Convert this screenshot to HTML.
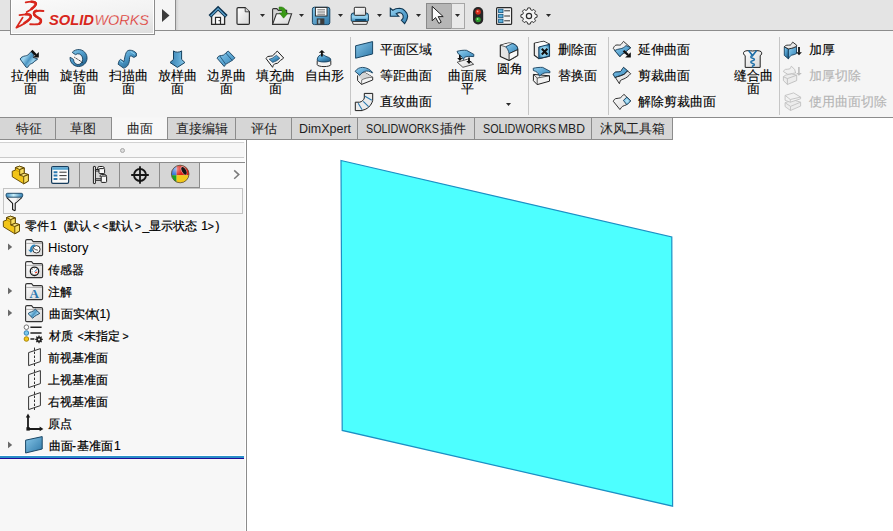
<!DOCTYPE html>
<html><head><meta charset="utf-8">
<style>
*{box-sizing:border-box}
html,body{margin:0;padding:0}
body{width:893px;height:531px;overflow:hidden;position:relative;background:#fff;font-family:"Liberation Sans",sans-serif;font-size:14px;color:#000}
.a{position:absolute}
.t{position:absolute;white-space:nowrap;line-height:13px;font-size:13px;-webkit-text-stroke:0.12px currentColor}
.l{position:absolute;white-space:nowrap;line-height:13px;font-size:13px;letter-spacing:0}
.c{text-align:center}
.lt{position:absolute;white-space:nowrap;line-height:13px;font-size:12.5px;color:#1e1e1e}
.tr{position:absolute;white-space:nowrap;line-height:13px;font-size:12px;-webkit-text-stroke:0.2px currentColor}
svg{position:absolute;overflow:visible}
</style></head><body>

<!-- ===== top bar ===== -->
<div class="a" style="left:0;top:0;width:893px;height:31px;background:#e4e4e4;border-bottom:1px solid #8c8c8c"></div>
<!-- arrow area -->
<div class="a" style="left:155px;top:0;width:21px;height:31px;background:#f5f5f5;border-bottom:1px solid #8c8c8c;border-right:1px solid #8c8c8c"></div>
<div class="a" style="left:176px;top:0;width:3px;height:30px;background:linear-gradient(90deg,#cfcfcf,#e4e4e4)"></div>

<!-- ===== ribbon ===== -->
<div class="a" style="left:0;top:31px;width:893px;height:86px;background:#f5f5f5"></div>
<!-- logo box -->
<div class="a" style="left:10px;top:0;width:145px;height:35px;border:1px solid #8c8c8c;border-top:none;background:#fff"></div>
<div class="a" style="left:12px;top:0;width:141px;height:33px;background:linear-gradient(172deg,#fafafa 0%,#f2f2f2 55%,#dedede 100%)"></div>

<div class="a" style="left:350px;top:37px;width:1px;height:78px;background:#c6c6c6"></div>
<div class="a" style="left:528px;top:37px;width:1px;height:78px;background:#c6c6c6"></div>
<div class="a" style="left:608px;top:37px;width:1px;height:78px;background:#c6c6c6"></div>
<div class="a" style="left:779px;top:37px;width:1px;height:78px;background:#c6c6c6"></div>

<!-- big buttons labels -->
<div class="t c" style="left:5px;top:69px;width:50px">拉伸曲<br>面</div>
<div class="t c" style="left:54px;top:69px;width:50px">旋转曲<br>面</div>
<div class="t c" style="left:103px;top:69px;width:50px">扫描曲<br>面</div>
<div class="t c" style="left:152px;top:69px;width:50px">放样曲<br>面</div>
<div class="t c" style="left:201px;top:69px;width:50px">边界曲<br>面</div>
<div class="t c" style="left:250px;top:69px;width:50px">填充曲<br>面</div>
<div class="t c" style="left:299px;top:69px;width:50px">自由形</div>

<div class="t" style="left:380px;top:43px">平面区域</div>
<div class="t" style="left:380px;top:69px">等距曲面</div>
<div class="t" style="left:380px;top:95px">直纹曲面</div>
<div class="t c" style="left:442px;top:69px;width:50px">曲面展<br>平</div>
<div class="t c" style="left:484px;top:62px;width:51px">圆角</div>

<div class="t" style="left:558px;top:43px">删除面</div>
<div class="t" style="left:558px;top:69px">替换面</div>

<div class="t" style="left:638px;top:43px">延伸曲面</div>
<div class="t" style="left:638px;top:69px">剪裁曲面</div>
<div class="t" style="left:638px;top:95px">解除剪裁曲面</div>
<div class="t c" style="left:728px;top:69px;width:51px">缝合曲<br>面</div>

<div class="t" style="left:809px;top:43px">加厚</div>
<div class="t" style="left:809px;top:69px;color:#b4b4b4">加厚切除</div>
<div class="t" style="left:809px;top:95px;color:#b4b4b4">使用曲面切除</div>

<!-- ===== tabs ===== -->
<div class="a" style="left:0;top:117px;width:673px;height:22px;background:#d6d6d6;border-top:1px solid #8c8c8c;border-right:1px solid #8c8c8c"></div>
<div class="a" style="left:55px;top:117px;width:1px;height:22px;background:#8c8c8c"></div>
<div class="a" style="left:111px;top:117px;width:57px;height:22px;background:#f7f7f7;border-left:1px solid #8c8c8c;border-right:1px solid #8c8c8c"></div>
<div class="a" style="left:235px;top:117px;width:1px;height:22px;background:#8c8c8c"></div>
<div class="a" style="left:291px;top:117px;width:1px;height:22px;background:#8c8c8c"></div>
<div class="a" style="left:357px;top:117px;width:1px;height:22px;background:#8c8c8c"></div>
<div class="a" style="left:474px;top:117px;width:1px;height:22px;background:#8c8c8c"></div>
<div class="a" style="left:591px;top:117px;width:1px;height:22px;background:#8c8c8c"></div>

<div class="t" style="left:16px;top:122px;color:#1e1e1e;-webkit-text-stroke:0.05px #1e1e1e">特征</div>
<div class="t" style="left:70px;top:122px;color:#1e1e1e;-webkit-text-stroke:0.05px #1e1e1e">草图</div>
<div class="t" style="left:127px;top:122px;color:#1e1e1e;-webkit-text-stroke:0.05px #1e1e1e">曲面</div>
<div class="t" style="left:176px;top:122px;color:#1e1e1e;-webkit-text-stroke:0.05px #1e1e1e">直接编辑</div>
<div class="t" style="left:251px;top:122px;color:#1e1e1e;-webkit-text-stroke:0.05px #1e1e1e">评估</div>
<div class="lt" id="dx" style="left:299px;top:123px">DimXpert</div>
<div class="lt" id="sw1" style="left:365.5px;top:123px;transform:scaleX(0.86);transform-origin:0 0">SOLIDWORKS</div>
<div class="t" style="left:440px;top:122px;color:#1e1e1e;-webkit-text-stroke:0.05px #1e1e1e">插件</div>
<div class="lt" id="sw2" style="left:482.7px;top:123px;transform:scaleX(0.86);transform-origin:0 0">SOLIDWORKS</div>
<div class="lt" id="mbd" style="left:557.5px;top:123px;transform:scaleX(0.97);transform-origin:0 0">MBD</div>
<div class="t" style="left:600px;top:122px;color:#1e1e1e;-webkit-text-stroke:0.05px #1e1e1e">沐风工具箱</div>

<!-- ===== left panel ===== -->
<div class="a" style="left:0;top:139px;width:247px;height:392px;background:#f7f7f7;border-top:1px solid #8c8c8c;border-right:1px solid #8c8c8c"></div>
<div class="a" style="left:245px;top:140px;width:1px;height:391px;background:#fff"></div>
<div class="a" style="left:0;top:140px;width:245px;height:2px;background:#fff"></div>
<div class="a" style="left:0;top:142px;width:244px;height:1px;background:#d2d2d2"></div>
<div class="a" style="left:0;top:157px;width:244px;height:1px;background:#cacaca"></div>
<div class="a" style="left:0;top:158px;width:245px;height:4px;background:#fbfbfb"></div>
<div class="a" style="left:119.5px;top:147.5px;width:5.5px;height:5.5px;border-radius:50%;background:#dcdcdc;border:1px solid #a8a8a8"></div>
<!-- panel tabs -->
<div class="a" style="left:0;top:162px;width:245px;height:1px;background:#8c8c8c"></div>
<div class="a" style="left:0;top:163px;width:40px;height:25px;background:#fafafa"></div>
<div class="a" style="left:39px;top:163px;width:161px;height:25px;background:#d6d6d6;border-left:1px solid #8c8c8c;border-right:1px solid #8c8c8c;border-bottom:1px solid #8c8c8c"></div>
<div class="a" style="left:79px;top:163px;width:1px;height:24px;background:#8c8c8c"></div>
<div class="a" style="left:119px;top:163px;width:1px;height:24px;background:#8c8c8c"></div>
<div class="a" style="left:159px;top:163px;width:1px;height:24px;background:#8c8c8c"></div>
<div class="a" style="left:200px;top:163px;width:45px;height:25px;background:#fafafa"></div>
<!-- filter box -->
<div class="a" style="left:3px;top:188px;width:240px;height:26px;background:#f7f7f7;border:1px solid #c4c4c4"></div>

<div class="a" style="left:247px;top:139px;width:646px;height:392px;background:#fff"></div>
<div class="a" style="left:247px;top:139px;width:426px;height:1px;background:#8c8c8c"></div>
<div class="a" style="left:673px;top:118px;width:220px;height:22px;background:#fff"></div>
<div class="a" style="left:0;top:117px;width:893px;height:1px;background:#8c8c8c"></div>
<div class="a" style="left:112px;top:117px;width:55px;height:1px;background:#f6f6f6"></div>

<!-- tree text -->
<div class="tr" style="left:25px;top:220px">零件</div>
<div class="tr" style="left:50px;top:220px">1</div>
<div class="tr" style="left:63.5px;top:220px">(</div>
<div class="tr" style="left:67px;top:220px">默认</div>
<div class="tr" id="lt1" style="left:93px;top:220px;font-size:10.5px">&lt;</div>
<div class="tr" style="left:102px;top:220px;font-size:10.5px">&lt;</div>
<div class="tr" style="left:108.5px;top:220px">默认</div>
<div class="tr" style="left:135px;top:220px;font-size:10.5px">&gt;</div>
<div class="tr" style="left:142.5px;top:220px">_</div>
<div class="tr" style="left:149px;top:220px">显示状态</div>
<div class="tr" style="left:201.3px;top:220px">1</div>
<div class="tr" style="left:207.8px;top:220px;font-size:10.5px">&gt;</div>
<div class="tr" style="left:215.5px;top:220px">)</div>
<div class="l" style="left:48px;top:241px">History</div>
<div class="tr" style="left:48px;top:264px">传感器</div>
<div class="tr" style="left:48px;top:286px">注解</div>
<div class="tr" style="left:48.5px;top:308px">曲面实体</div>
<div class="tr" style="left:95.5px;top:308px">(1)</div>
<div class="tr" style="left:48.5px;top:330px">材质</div>
<div class="tr" style="left:77.5px;top:330px;font-size:10.5px">&lt;</div>
<div class="tr" style="left:84px;top:330px">未指定</div>
<div class="tr" style="left:122.6px;top:330px;font-size:10.5px">&gt;</div>
<div class="tr" style="left:48px;top:352px">前视基准面</div>
<div class="tr" style="left:48px;top:374px">上视基准面</div>
<div class="tr" style="left:48px;top:396px">右视基准面</div>
<div class="tr" style="left:48px;top:418px">原点</div>
<div class="tr" style="left:48.5px;top:440px">曲面</div>
<div class="tr" style="left:72px;top:440px">-</div>
<div class="tr" style="left:76.5px;top:440px">基准面</div>
<div class="tr" style="left:114px;top:440px">1</div>
<div class="a" style="left:0;top:455px;width:244px;height:1px;background:#fff"></div>
<div class="a" style="left:0;top:456px;width:244px;height:2px;background:#2a8fc8"></div>
<div class="a" style="left:0;top:458px;width:244px;height:1px;background:#1c0c98"></div>

<!-- ===== icons & graphics ===== -->
<svg style="left:0;top:0" width="893" height="531" viewBox="0 0 893 531">
<!-- graphics surface -->
<polygon points="341,160.5 671.8,237 672.6,506.2 342.2,430.4" fill="#4dffff" stroke="#1c8fc4" stroke-width="1.2"/>

<defs>
<linearGradient id="gb" x1="0" y1="0" x2="1" y2="1"><stop offset="0" stop-color="#86c6e8"/><stop offset="1" stop-color="#2f78a8"/></linearGradient>
<linearGradient id="gb2" x1="0" y1="0" x2="1" y2="0"><stop offset="0" stop-color="#3f8fbf"/><stop offset="0.5" stop-color="#a6d8f0"/><stop offset="1" stop-color="#3a86b6"/></linearGradient>
<linearGradient id="gw" x1="0" y1="0" x2="1" y2="1"><stop offset="0" stop-color="#ffffff"/><stop offset="1" stop-color="#d6d6d6"/></linearGradient>
<linearGradient id="gy" x1="0" y1="0" x2="0" y2="1"><stop offset="0" stop-color="#fff07a"/><stop offset="1" stop-color="#e8be1a"/></linearGradient>
<linearGradient id="gb3" x1="0" y1="0" x2="1" y2="0.6"><stop offset="0" stop-color="#4f9ccc"/><stop offset="0.35" stop-color="#9fd6f0"/><stop offset="0.6" stop-color="#4a94c2"/><stop offset="0.8" stop-color="#9ad2ee"/><stop offset="1" stop-color="#3f88b8"/></linearGradient>
<linearGradient id="gb4" x1="0" y1="0" x2="0.7" y2="1"><stop offset="0" stop-color="#8fd0ee"/><stop offset="0.5" stop-color="#4f9ccb"/><stop offset="1" stop-color="#24648f"/></linearGradient>
<linearGradient id="gb5" x1="0" y1="0" x2="1" y2="1"><stop offset="0" stop-color="#96d2f0"/><stop offset="0.5" stop-color="#5ea8d4"/><stop offset="1" stop-color="#3a84b4"/></linearGradient>
<radialGradient id="gr1" cx="0.5" cy="0.5" r="0.6"><stop offset="0" stop-color="#c8ecfa"/><stop offset="0.6" stop-color="#7cc4e6"/><stop offset="1" stop-color="#2a6e9c"/></radialGradient>
<radialGradient id="ballhl" cx="0.5" cy="0.5" r="0.5"><stop offset="0" stop-color="#fff" stop-opacity="0.55"/><stop offset="1" stop-color="#fff" stop-opacity="0"/></radialGradient>
<linearGradient id="gfil" x1="0" y1="0" x2="1" y2="0"><stop offset="0" stop-color="#3a8cc0"/><stop offset="0.45" stop-color="#c8eefa"/><stop offset="1" stop-color="#2f7db0"/></linearGradient>
<linearGradient id="gpr" x1="0" y1="0" x2="0" y2="1"><stop offset="0" stop-color="#4a9ccc"/><stop offset="0.45" stop-color="#9ad6f2"/><stop offset="1" stop-color="#3a88b8"/></linearGradient>
<linearGradient id="gar" x1="0" y1="0" x2="1" y2="0"><stop offset="0" stop-color="#3a80b0"/><stop offset="0.55" stop-color="#5aa4d0"/><stop offset="1" stop-color="#8ccbea"/></linearGradient>
</defs>

<!-- 3DS logo -->
<g fill="none" stroke="#d8261c" stroke-linecap="round" stroke-linejoin="round">
<path d="M25.8,2.4 C29,1.6 33,1.4 35.2,2.3 C37,3.3 36,5.2 34.5,6.6 C32,9 29,10.8 26.8,12" stroke-width="1.9"/>
<path d="M19.5,15.2 C23,14.6 27,14.2 29.5,14.6 C31.5,15.2 31.4,17.2 30,18.8 C27,22 21,25.6 16.4,27.6 L22.6,17.6" stroke-width="1.8"/>
<path d="M31.5,1.7 C34,1.6 36.2,2.4 35.6,4.4 C35,6 33.4,7.6 31.6,8.8" stroke-width="2.6"/>
<path d="M26,14.3 C28,14.2 30.6,14.4 30.8,16.6 C30.8,18.6 28.4,20.6 24.4,23" stroke-width="2.5"/>
<path d="M36.4,10.8 C34.4,11.2 33.2,12.6 34.4,14.8 C35.6,16.6 38.6,17.8 40.2,19 C41.4,20.2 41.2,22.4 39.4,23.6" stroke-width="2.5"/>
<path d="M43.4,11 C40.5,10.6 37,10.6 35,11.6 C33.3,12.6 33.4,14.6 35.4,16.2 C37.5,17.8 40.6,18.8 41,21 C41.3,23 39.5,24.2 37.5,24.3 C35,24.5 32.5,24.4 30.2,24.3" stroke-width="1.9"/>
</g>
<text x="49" y="25" font-family="Liberation Sans" font-size="15" font-weight="bold" font-style="italic" fill="#d8261c" textLength="45" lengthAdjust="spacingAndGlyphs">SOLID</text>
<text x="94.5" y="25" font-family="Liberation Sans" font-size="15" font-style="italic" fill="#d8261c" stroke="#f2f2f2" stroke-width="0.3" textLength="54.5" lengthAdjust="spacingAndGlyphs">WORKS</text>

<!-- home -->
<path d="M211.6,15 V24.3 H224.6 V15" fill="#f4f4f4" stroke="#2a2a2a" stroke-width="1.3"/>
<rect x="215.5" y="17.4" width="5" height="6.9" fill="#fff" stroke="#2a2a2a" stroke-width="1.2"/>
<rect x="218.6" y="20" width="1.2" height="1.2" fill="#2a2a2a"/>
<polyline points="209.8,16.4 218.1,8.2 226.4,16.4" fill="none" stroke="#0f3552" stroke-width="3.6" stroke-linejoin="miter"/>
<polyline points="210.6,16 218.1,8.6 225.6,16" fill="none" stroke="#5ea6d2" stroke-width="1.1"/>

<!-- new doc -->
<path d="M237,8.8 Q237,7.6 238.2,7.6 H245.2 L249.4,11.8 V23.2 Q249.4,24.4 248.2,24.4 H238.2 Q237,24.4 237,23.2 Z" fill="url(#gw)" stroke="#2a2a2a" stroke-width="1.2"/>
<path d="M245.2,7.6 V11.8 H249.4" fill="#d0d0d0" stroke="#2a2a2a" stroke-width="0.8"/>

<!-- open -->
<path d="M272.6,24.4 V9.6 Q272.6,8.6 273.6,8.6 H276.8 L278.4,10.4 H286.6 V13.8" fill="#d4d4d4" stroke="#333" stroke-width="1.1"/>
<path d="M272.6,24.4 L276.4,13.8 H291.6 L288,24.4 Z" fill="url(#gw)" stroke="#333" stroke-width="1.1"/>
<path d="M279,7 C283.5,6.4 286.4,8.8 285.8,13 L288.2,13 L283.6,18.2 L279.4,13 L282,13 C282.4,10.6 281.4,9.4 279,9.6 Z" fill="#3a9a16" stroke="#24700c" stroke-width="0.5"/>

<!-- save -->
<rect x="312.4" y="7.2" width="17.4" height="17.4" rx="2" fill="url(#gb)" stroke="#1a4766" stroke-width="1"/>
<rect x="315.4" y="7.4" width="11.6" height="8.6" fill="#fcfcfc" stroke="#222" stroke-width="0.9"/>
<path d="M317.4,9.8 H325 M317.4,12 H325 M317.4,14.2 H325" stroke="#4a4a4a" stroke-width="0.8"/>
<rect x="316.8" y="18.4" width="7.6" height="6.2" fill="#3c3c3c"/>
<rect x="318.2" y="19.6" width="2" height="4" fill="#9ab8c8"/>

<!-- print -->
<path d="M351.2,15.2 Q351.2,13 353.4,13 H366.2 Q368.4,13 368.4,15.2 V20.2 Q368.4,21.4 367.2,21.4 H352.4 Q351.2,21.4 351.2,20.2 Z" fill="url(#gpr)" stroke="#14405e" stroke-width="1"/>
<rect x="355.2" y="19" width="10.9" height="1.9" fill="#0e4a70"/>
<rect x="354.3" y="7.3" width="11.3" height="8" rx="0.8" fill="url(#gw)" stroke="#2a2a2a" stroke-width="1"/>
<path d="M352.4,21.6 H367.6 L366.8,24.3 H353.2 Z" fill="#fafafa" stroke="#333" stroke-width="1" stroke-linejoin="round"/>
<!-- undo -->
<path d="M390.3,8.3 L392.8,10.3 C394.5,9 397,8.3 399.6,8.3 C402,8.4 404,9.6 405,10.8 C407,12.8 407.8,14.6 407.7,16.2 C407.6,18.6 406.8,20.4 404.6,23.7 L401.4,20.3 C402.6,19.4 403.2,18.6 403.2,17.6 C403.4,16.2 403,14.8 402.3,14 C401.4,13 400.4,12.6 399.6,12.6 C398.6,12.6 397.6,12.9 396.2,13.7 L398.7,16.2 L390.3,16.2 Z" fill="url(#gb5)" stroke="#0f3550" stroke-width="1.1" stroke-linejoin="miter"/>
<!-- select button -->
<rect x="426.5" y="3.5" width="25" height="25" fill="#b6b6b6" stroke="#8a8a8a" stroke-width="1"/>
<rect x="451.5" y="3.5" width="13" height="25" fill="#e9e9e9" stroke="#a6a6a6" stroke-width="1"/>
<polygon points="432.2,6.4 432.2,20.8 435.6,17.6 438.8,23.4 441.2,22.2 438.2,16.6 443.2,16.6" fill="#fafafa" stroke="#1e1e1e" stroke-width="1" stroke-linejoin="round"/>

<!-- traffic -->
<rect x="473" y="7" width="10.2" height="17.4" rx="5" fill="#262626"/>
<circle cx="478.1" cy="12" r="2.7" fill="#d62a1a"/>
<circle cx="478.1" cy="19.6" r="2.7" fill="#2a9a2a"/>
<circle cx="477.6" cy="11.4" r="0.9" fill="#ff9a8a"/>
<circle cx="477.6" cy="19" r="0.9" fill="#9ae09a"/>

<!-- list -->
<rect x="496.6" y="7.6" width="15" height="16.8" rx="1" fill="#f2f2f2" stroke="#2a2a2a" stroke-width="1.2"/>
<rect x="498.6" y="9.2" width="4.4" height="3.4" fill="#5ab0dc" stroke="#14507a" stroke-width="0.8"/>
<rect x="498.6" y="14.3" width="4.4" height="3.4" fill="#5ab0dc" stroke="#14507a" stroke-width="0.8"/>
<rect x="498.6" y="19.2" width="4.4" height="3.4" fill="#5ab0dc" stroke="#14507a" stroke-width="0.8"/>
<path d="M504.2,10.8 H510 M504.2,16 H510 M504.2,20.8 H510" stroke="#333" stroke-width="1"/>

<!-- gear -->
<path id="gear" d="M527.6,8.2 H530.4 L531,10.4 L532.6,11.1 L534.6,10 L536.6,12 L535.5,14 L536.2,15.6 L538.4,16.2 V19 L536.2,19.6 L535.5,21.2 L536.6,23.2 L534.6,25.2 L532.6,24.1 L531,24.8 L530.4,27 H527.6 L527,24.8 L525.4,24.1 L523.4,25.2 L521.4,23.2 L522.5,21.2 L521.8,19.6 L519.6,19 V16.2 L521.8,15.6 L522.5,14 L521.4,12 L523.4,10 L525.4,11.1 L527,10.4 Z" fill="#f4f4f4" stroke="#2a2a2a" stroke-width="1.1" stroke-linejoin="round" transform="translate(529 16) scale(0.86) translate(-529 -17.6)"/>
<circle cx="529" cy="16" r="2.6" fill="#f4f4f4" stroke="#2a2a2a" stroke-width="1.2"/>
<!-- 拉伸曲面 -->
<path d="M20.1,59 C21,57.2 23,56.2 25.3,55.9 C27,55.6 28.6,54.8 29.6,53.2 C30.2,52.4 30.8,51.8 31.5,51.6 L33.6,54.2 L33.1,57.4 L37.7,59 C36.6,60.2 35.6,60.6 34.8,61.2 C33.6,62.4 32.6,63.4 31.2,63.8 C29.6,64.2 28.8,65.4 27.8,67.3 L26.1,67.3 Z" fill="url(#gb3)" stroke="#173f5e" stroke-width="0.9" stroke-linejoin="round"/>
<path d="M31.6,50.6 L36,55.2" stroke="#111" stroke-width="2.4"/>
<polygon points="33.1,57.6 38.8,57.6 38.8,51.9" fill="#111"/>

<!-- 旋转曲面 -->
<path d="M72.2,52.4 A8.5,8.5 0 1,1 70.1,57.2 L73.5,59.4 A4.6,5.4 0 1,0 75.5,54.7 Z" fill="url(#gb4)" stroke="#173f5e" stroke-width="0.9" stroke-linejoin="round"/>
<path d="M74.3,57.2 L82.7,62.5" stroke="#1a1a1a" stroke-width="0.9" stroke-dasharray="1.2,0.6"/>

<!-- 扫描曲面 -->
<path d="M118.1,64.2 L119.2,60.6 L120.6,59.4 L123.9,61.6 C124.6,59 125,55 126.2,52.6 C127,50.8 128.4,50.2 130,50.2 C132.4,50.2 134.6,51.4 136.4,53.2 L136.4,56.1 L133.9,57.4 L131.4,56.1 C130.4,55.6 129.8,56.4 129.6,57.4 C129.4,60 129.6,62.6 127.6,65.6 C126.4,67.2 124.8,68 123.5,68.1 Z" fill="url(#gb4)" stroke="#173f5e" stroke-width="0.9" stroke-linejoin="round"/>
<path d="M120,60.4 L123,62.6 M130.6,51.6 L135,54.4" stroke="#9ad8f2" stroke-width="0.9"/>
<!-- 放样曲面 -->
<path d="M173.5,50.9 C175,52.6 180,52.6 181.6,50.9 L181.6,59.4 L184.9,62.5 L177.4,67.4 L170,62.5 L173.5,59.4 Z" fill="url(#gar)" stroke="#14405e" stroke-width="1" stroke-linejoin="round"/>

<!-- 边界曲面 -->
<path d="M217.1,58.2 C217.8,57 218.4,56.2 219.2,55.9 C220.6,55.4 222.2,55.6 223.4,55.1 C224.4,54.6 225,53.8 225.6,53.2 C226.6,52.2 227.4,51.6 228.3,51.1 L234.9,57.8 C234,59 233,59.8 232,60.5 C230.8,61.4 229.6,62 228.7,62.6 C227.4,63.2 226.2,63.8 225.4,64.8 L224.2,66.5 Z" fill="url(#gb5)" stroke="#173f5e" stroke-width="0.9" stroke-linejoin="round"/>
<path d="M219.8,56 L225.6,64.2 M225.8,53 L232.2,60.4" stroke="#1f5478" stroke-width="0.9"/>

<!-- 填充曲面 -->
<path d="M266.1,58.6 C266.6,57.4 267.2,56.8 267.8,56.5 C269.4,56 271,56.4 272.4,55.9 C273.2,55.6 273.8,54.8 274.4,54 C275.4,52.8 276.4,51.8 277.3,51.1 L283.7,58 C282.6,59 281.6,59.6 280.6,60.3 C279.6,61 278.6,62.4 277.7,63.1 C276.6,63.8 275.4,63.4 274.4,64 C273.6,64.6 273,66 272.6,67.3 Z" fill="#f4f4f4" stroke="#1e1e1e" stroke-width="1" stroke-linejoin="round"/>
<path d="M269.2,59.2 C270.5,58.8 271.6,58.6 272.6,58 C274,57 275.4,55.8 276.5,55.3 L279.8,58.2 C278.6,59.4 277.2,60.4 276.1,61.1 C274.8,61.6 273.6,61.8 272.8,62.5 Z" fill="url(#gb4)" stroke="#173f5e" stroke-width="0.7" stroke-linejoin="round"/>

<!-- 自由形 -->
<path d="M317.2,60.5 V64.6 A6.8,2 0 0,0 330.8,64.6 V60.5" fill="#f2f2f2" stroke="#2a2a2a" stroke-width="1"/>
<path d="M317.2,60 C317.2,57 319.5,54.6 322,54.6 C324,54.6 325,56.2 327,56.8 C329.4,57.4 330.8,58.4 330.8,60 A6.8,2 0 0,1 317.2,60 Z" fill="url(#gb4)" stroke="#173f5e" stroke-width="0.9"/>
<path d="M321.9,52 V56.4" stroke="#111" stroke-width="1.8"/>
<polygon points="318.8,52.8 321.9,50 325,52.8" fill="#111"/>

<!-- 平面区域 -->
<polygon points="355.6,45.8 372.6,41.6 372.6,54 355.6,58.2" fill="url(#gb)" stroke="#1a4766" stroke-width="1" stroke-linejoin="round"/>

<!-- 等距曲面 -->
<path d="M357.6,75.6 C360.5,73.4 363.5,72.4 365.6,73 L372.7,77.2 V80 L361.6,84.4 L357.6,80.6 Z" fill="#f4f4f4" stroke="#2a2a2a" stroke-width="1" stroke-linejoin="round"/>
<path d="M357.6,75.6 C360.5,73.4 363.5,72.4 365.6,73 L372.7,77.2 C368,77.4 364,78.4 361.6,80.2 C360.8,78.6 359.5,77.4 357.6,75.6 Z" fill="#d6d6d6"/>
<path d="M361.6,80.2 C364,78.4 368,77.4 372.7,77.2 M361.6,80.2 V84.4" fill="none" stroke="#444" stroke-width="0.7"/>
<path d="M355.1,71.4 C357,68.6 359.6,67.4 362.6,67.4 C366.6,67.4 370.4,69.6 372.7,72.6 L372.2,73 C370,71.2 367,70.6 364.6,71.4 C362.6,72.2 361,73.6 359.8,75.4 Z" fill="url(#gb5)" stroke="#173f5e" stroke-width="0.9" stroke-linejoin="round"/>

<!-- 直纹曲面 -->
<path d="M364.3,93.4 H372.7 V100.4 C371.5,105.5 367,109.6 362.3,110.2 V110.6 H355.3 V102.2 H359.6 C361.8,101.8 364,99.8 364.3,98 Z" fill="#ececec" stroke="#1e1e1e" stroke-width="1" stroke-linejoin="round"/>
<path d="M365,96.3 L371.8,100.2 M363.2,101.3 L368.6,106.7 M358.2,103.3 L362.1,109.7" stroke="#2a7ab0" stroke-width="1.1"/>

<!-- 曲面展平 -->
<polygon points="457.2,62.2 467.5,59.2 473.7,64.3 462.9,67.3" fill="url(#gw)" stroke="#444" stroke-width="0.9" stroke-linejoin="round"/>
<path d="M459.9,55 V59 M469,57.4 V62" stroke="#111" stroke-width="1.8"/>
<polygon points="457.2,58 462.6,58 459.9,61" fill="#111"/>
<polygon points="466.3,61 471.7,61 469,64" fill="#111"/>
<path d="M457,51.4 C460,50.4 464,50 466.5,50.3 L473.9,54.4 L473.7,56.6 C470,56.2 466,56.4 464.4,57.4 L463.4,59.6 C462,57 460.4,54.6 458.3,53.9 Z" fill="url(#gb5)" stroke="#173f5e" stroke-width="0.9" stroke-linejoin="round"/>

<!-- 圆角 -->
<path d="M500.3,45.2 L507.3,43.2 C510,43 512.6,43.4 514.1,44.3 C516,45.4 517.4,47 517.7,48.6 V55.4 L509.1,60.4 L500.3,56.5 Z" fill="#e4e4e4" stroke="#1e1e1e" stroke-width="1.1" stroke-linejoin="round"/>
<path d="M500.6,45.3 L507.3,43.4 C509.5,43.2 511.4,43.4 512.2,43.7 L505.7,46.8 Z" fill="#f8f8f8"/>
<path d="M505.7,46.8 L512.2,43.6 C514.4,44 516.4,45.4 517.4,47.4 L517.7,49.7 L509.1,53.6 C508.6,50.8 507.4,48.4 505.7,46.8 Z" fill="url(#gb5)" stroke="#173f5e" stroke-width="0.9" stroke-linejoin="round"/>
<path d="M509.1,53.6 L517.7,49.7 V55.4 L509.1,60.4 Z" fill="#f8f8f8" stroke="#1e1e1e" stroke-width="0.9" stroke-linejoin="round"/>
<path d="M500.3,45.2 L505.7,46.8" stroke="#333" stroke-width="0.7"/>

<!-- 删除面 -->
<path d="M534.3,43.4 L543.6,41.2 L549.5,44.3 V56.1 L538.8,58.6 L534.3,55.2 Z" fill="#ececec" stroke="#1e1e1e" stroke-width="1.1" stroke-linejoin="round"/>
<path d="M534.6,43.5 L543.6,41.4 L549.2,44.3 L538.8,47 Z" fill="#fbfbfb"/>
<path d="M538.8,47 L549.5,44.3 V56.1 L538.8,58.6 Z" fill="url(#gr1)" stroke="#173f5e" stroke-width="1" stroke-linejoin="round"/>
<path d="M541.8,48.8 L547.4,54.6 M547.4,48.8 L541.8,54.6" stroke="#111" stroke-width="2.1"/>

<!-- 替换面 -->
<path d="M533.4,74.4 L549.5,75.8 V81.2 L537.2,84.6 L533.4,80.7 Z" fill="#f0f0f0" stroke="#1e1e1e" stroke-width="1" stroke-linejoin="round"/>
<path d="M533.4,74.4 L537.2,78 L549.5,75.8 M537.2,78 V84.6" fill="none" stroke="#333" stroke-width="0.8"/>
<path d="M533.2,68.3 C536,67.6 540,67.2 542.7,67.4 L549.9,71.2 V72.8 C547,72.6 544.4,72.8 542.8,73.6 C541.4,74.4 540.2,75.4 539.5,76.2 C538.6,73 536.4,71.2 533.4,70.6 Z" fill="url(#gb5)" stroke="#173f5e" stroke-width="0.9" stroke-linejoin="round"/>

<!-- 延伸曲面 -->
<path d="M613.3,48.4 C614,46.6 614.8,45.6 615.8,45.2 C617.4,44.6 619,45.4 620.3,45 C621.6,44.4 622.4,42.4 623.5,41.4 L630.7,47.7 C629.6,48.8 628.4,49.4 627.4,50.2 L625,52.6 C623.6,53.4 622.4,53.6 621.6,54.6 L619.9,56.6 Z" fill="url(#gw)" stroke="#1e1e1e" stroke-width="0.9" stroke-linejoin="round"/>
<path d="M614.6,50.6 C616.4,49.6 618.4,49 620.2,48.8 C622.4,48.6 624.4,47.2 626,45.6 L630.7,47.7 C629.6,48.8 628.4,49.4 627.4,50.2 L625,52.6 C623.6,53.4 622.4,53.6 621.6,54.6 L619.9,56.6 Z" fill="url(#gb5)" stroke="#173f5e" stroke-width="0.9" stroke-linejoin="round"/>
<path d="M623.5,50.7 L628,54.9" stroke="#111" stroke-width="2.2"/>
<polygon points="625.1,57.6 630.8,57.6 630.8,52.2" fill="#111"/>

<!-- 剪裁曲面 -->
<path d="M613.3,74.4 C614,72.8 614.8,72.3 615.8,72.1 C617.4,71.8 619,72.2 620.3,71.7 C621.6,71 622.4,68.4 623.5,67.4 L630.7,73.7 C629.6,74.8 628.4,76.2 627.1,77.1 C626,77.9 625,78.4 623.9,78.9 C622.4,79.4 621.2,79.8 620.3,80.7 L619.4,83.7 Z" fill="url(#gw)" stroke="#1e1e1e" stroke-width="0.9" stroke-linejoin="round"/>
<path d="M613.3,74.4 C614,72.8 614.8,72.3 615.8,72.1 C617.4,71.8 619,72.2 620.3,71.7 C621.6,71 622.4,68.4 623.5,67.4 L627.6,70.8 C626.2,72 625.4,73.6 623.9,74.4 C622.6,75 621.4,75.2 620.3,75.8 C618.4,76.4 616.4,76.8 614.9,77.6 Z" fill="url(#gb5)" stroke="#173f5e" stroke-width="0.9" stroke-linejoin="round"/>
<path d="M614.9,77.6 C616.4,76.8 618.4,76.4 620.3,75.8 C621.4,75.2 622.6,75 623.9,74.4 C625.4,73.6 626.2,72 627.6,70.8" fill="none" stroke="#222" stroke-width="0.9"/>

<!-- 解除剪裁曲面 -->
<path d="M613.3,101.3 C614,99.6 614.8,98.9 615.8,98.6 C617.4,98.2 619,98.4 620.3,97.9 C621.8,97.2 622.8,95.2 623.9,94.3 L630.7,100.9 C629.2,102.2 627.8,103.8 626.2,104.9 C625,105.6 623.6,105.6 622.6,106.3 C621.6,107 620.8,108.4 619.9,109.5 Z" fill="url(#gw)" stroke="#1e1e1e" stroke-width="0.9" stroke-linejoin="round"/>
<path d="M623.4,100.4 L626.8,97.2 L630.7,100.9 C629.2,102.2 628,103.6 626.8,104.8 Z" fill="url(#gr1)" stroke="#173f5e" stroke-width="0.9" stroke-linejoin="round"/>

<!-- 缝合曲面 -->
<path d="M744.2,51.6 C746,50.2 750,50.6 752.6,51 C755.2,50.6 759,50.2 761,51.6 C762.4,53 761.6,55 760.2,55.6 L760.2,67.4 L745.2,67.4 L745.2,55.6 C743.6,55 742.8,53 744.2,51.6 Z" fill="url(#gw)" stroke="#222" stroke-width="1" stroke-linejoin="round"/>
<path d="M748.6,50.6 L752.6,55.6 L756.6,50.6" fill="none" stroke="#1f6fa8" stroke-width="1.6"/>
<path d="M752.6,55.4 C750.2,56 750.2,57.8 752.6,58.2 C755,58.6 755,60.4 752.6,60.8 C750.2,61.2 750.2,63 752.6,63.4 C755,63.8 755,65.6 752.6,66 L752.6,67.4" fill="none" stroke="#1f6fa8" stroke-width="1.5"/>

<!-- 加厚 -->
<path d="M784.3,46.8 L788.4,48.9 V58.8 L784.3,55.4 Z" fill="url(#gb4)" stroke="#173f5e" stroke-width="0.9" stroke-linejoin="round"/>
<path d="M788.4,48.9 C789.4,48.6 790.4,48.6 791.3,48.4 C793,48 794.8,47.2 796.5,46.4 V53.6 C795,54.4 793.4,54.8 791.6,55.2 C790.4,55.6 789.2,57.6 788.4,58.8 Z" fill="url(#gb5)" stroke="#173f5e" stroke-width="0.9" stroke-linejoin="round"/>
<path d="M784.3,46.8 C785,45.8 785.8,45.3 786.8,45.2 C788,45 789.4,45.3 790.4,45 C791.4,44.6 792,42.8 792.7,42.1 L796.7,45.2 L796.5,46.4 C794.8,47.2 793,48 791.3,48.4 C790.4,48.6 789.4,48.6 788.4,48.9 Z" fill="url(#gw)" stroke="#1e1e1e" stroke-width="0.9" stroke-linejoin="round"/>
<path d="M799,47 V52.6" stroke="#111" stroke-width="1.8"/>
<polygon points="796.3,52.2 801.9,52.2 799,55.2" fill="#111"/>

<!-- 加厚切除 disabled -->
<g stroke="#bdbdbd" stroke-width="0.9" stroke-linejoin="round">
<path d="M783.4,76.7 C784.6,75.6 786,74.8 787.4,74.7 C789,74.4 790,73.8 791.3,73.8 L796.7,75.2 V80.6 L787.4,84.5 L783.4,80.6 Z" fill="#ececec"/>
<path d="M783.4,76.7 L787.4,78.6 L796.7,75.2 M787.4,78.6 V84.5" fill="none"/>
<path d="M783.4,71.6 C784,70.4 784.6,69.6 785.4,69.4 C787,69 788.6,69.4 789.8,68.9 C790.6,68.4 790.8,66.8 791.3,66.2 L794.7,69.4 L795.6,73 C794.4,73.2 793.4,73.2 792.3,73.5 C790.6,73.8 789.2,74.2 787.8,74.3 Z" fill="#f0f0f0"/>
</g>
<path d="M798.9,67.1 V73.6" stroke="#bdbdbd" stroke-width="1.6"/>
<polygon points="796.2,73 801.8,73 798.9,75.8" fill="#bdbdbd"/>

<!-- 使用曲面切除 disabled -->
<g stroke="#c2c2c2" stroke-width="0.9" stroke-linejoin="round">
<path d="M785.1,102.7 C788,101.6 791.6,100.4 794.7,100.3 L800.6,102.2 V106.1 L790.5,110.5 L785.1,106.6 Z" fill="#ececec"/>
<path d="M785.1,102.7 L790.5,106.4 L800.6,102.2 M790.5,106.4 V110.5" fill="none"/>
<path d="M785.1,95.4 L793.7,92.9 L800.6,97.1 V98.8 L790.3,102.2 L785.1,100.3 Z" fill="#f2f2f2"/>
<path d="M785.1,95.4 L790.3,99.5 L800.6,97.1 M790.3,99.5 V102.2" fill="none"/>
</g>

<!-- panel tab icons -->
<!-- part (active tab) -->
<g id="part" stroke="#5a4200" stroke-width="0.9" stroke-linejoin="round">
<path d="M12.2,171.3 L15.4,170.1 L15.4,167.6 L19.5,166.2 L24.2,167.9 L24.2,173.3 L28.4,174.6 L28.4,181.1 L23.7,183.8 L12.3,176.8 Z" fill="#f2c518"/>
<path d="M15.4,167.6 L19.5,166.2 L24.2,167.9 L19.7,169.6 Z" fill="#fbe680"/>
<path d="M19.7,169.6 L24.2,167.9 L24.2,173.3 L19.7,175 Z" fill="#f8de60"/>
<path d="M19.7,175 L24.2,173.3 L28.4,174.6 L23.7,176.5 Z" fill="#fbe680"/>
<path d="M23.7,176.5 L28.4,174.6 L28.4,181.1 L23.7,183.8 Z" fill="#f8de60"/>
<path d="M15.4,170.1 L19.7,172" fill="none" stroke-width="0.5" stroke="#a88000"/>
</g>
<!-- list -->
<rect x="51.6" y="166.6" width="17" height="16.8" rx="1.4" fill="#fafafa" stroke="#163c5c" stroke-width="1.2"/>
<rect x="52.2" y="167.2" width="15.8" height="2.6" fill="#58a6d2"/>
<path d="M53.6,172.2 H57.4 M53.6,175.6 H57.4 M53.6,179 H57.4" stroke="#2a78b0" stroke-width="2"/>
<path d="M59.4,172.2 H66.6 M59.4,175.6 H66.6 M59.4,179 H66.6" stroke="#333" stroke-width="1"/>
<!-- config -->
<g fill="#fafafa" stroke="#1e1e1e" stroke-width="1" stroke-linejoin="round">
<path d="M97.8,169.6 V167.8 Q97.8,166.5 99.2,166.5 H102.6 Q104,166.5 104.5,168.4"/>
<path d="M100.2,177 V175.6 Q100.2,174.6 101.4,174.6 H104.8 Q106.2,174.6 106.6,176.2"/>
<rect x="93.4" y="166.4" width="2" height="17.2" rx="0.4"/>
<rect x="95.4" y="169.5" width="3.8" height="1.5"/>
<rect x="95.4" y="178.8" width="6" height="1.5"/>
<rect x="99" y="168.6" width="5.6" height="5" rx="0.8"/>
<rect x="101.2" y="176.1" width="5.4" height="6.3" rx="0.8"/>
</g>
<!-- crosshair -->
<circle cx="140" cy="175" r="6" fill="none" stroke="#161616" stroke-width="1.8"/>
<path d="M131.2,175 H148.8 M140,166.2 V183.8" stroke="#161616" stroke-width="1.8"/>
<!-- display ball -->
<clipPath id="ballc"><circle cx="180.2" cy="174" r="8.8"/></clipPath>
<g clip-path="url(#ballc)">
<rect x="170" y="164" width="6.6" height="11.2" fill="#2a6ad6"/>
<rect x="176.6" y="164" width="14" height="11.2" fill="#dc2218"/>
<rect x="170" y="175.2" width="6.6" height="10" fill="#1aa424"/>
<rect x="176.6" y="175.2" width="14" height="10" fill="#f2c81a"/>
<circle cx="176" cy="169" r="7" fill="url(#ballhl)"/>
</g>
<ellipse cx="183.8" cy="170.6" rx="2.6" ry="4.8" transform="rotate(-28 183.8 170.6)" fill="#f0a0a0"/>
<ellipse cx="184" cy="170.8" rx="2" ry="4.2" transform="rotate(-28 184 170.8)" fill="#151515"/>
<circle cx="180.2" cy="174" r="8.8" fill="none" stroke="#5a4a30" stroke-width="0.8"/>
<!-- > -->
<polyline points="234.2,170.4 238.8,174.6 234.2,178.8" fill="none" stroke="#7a7a7a" stroke-width="1.5"/>

<!-- filter -->
<path d="M6.6,197.4 L12.6,203.4 V209.6 L14.4,210.6 L15.2,210.2 V203.4 L22,197.4" fill="#f6f6f6" stroke="#141414" stroke-width="1.1" stroke-linejoin="round"/>
<path d="M15.6,202.6 L20.6,198 L17,198 Z" fill="#d8d8d8"/>
<rect x="6.1" y="193.3" width="16.6" height="3.9" rx="1.4" fill="url(#gfil)" stroke="#14405e" stroke-width="0.9"/>
<!-- tree root part -->
<use href="#part" x="-8.9" y="50"/>
<!-- expanders -->
<g fill="#6a6a6a">
<polygon points="8,243.6 12.2,246.9 8,250.2"/>
<polygon points="8,287.6 12.2,290.9 8,294.2"/>
<polygon points="8,309.6 12.2,312.9 8,316.2"/>
<polygon points="8,441.6 12.2,444.9 8,448.2"/>
</g>

<!-- folders -->
<g id="fold">
<path d="M25.6,241 Q25.6,239.6 27,239.6 L31.6,239.6 L33.2,241.6 L41.2,241.6 Q42.6,241.6 42.6,243 L42.6,254.4 Q42.6,255.6 41.4,255.6 L26.8,255.6 Q25.6,255.6 25.6,254.4 Z" fill="url(#gw)" stroke="#333" stroke-width="1.1" stroke-linejoin="round"/>
<path d="M26.2,243.4 H42" stroke="#9a9a9a" stroke-width="0.8"/>
</g>
<use href="#fold" y="22"/>
<use href="#fold" y="44"/>
<use href="#fold" y="66"/>
<!-- history symbol -->
<circle cx="36.4" cy="249.3" r="3.7" fill="#fff" stroke="#1e1e1e" stroke-width="0.9"/>
<path d="M33.6,248.2 L35.4,249.6 L37.8,250.2" fill="none" stroke="#1e1e1e" stroke-width="0.8"/>
<path d="M35.2,245.4 C32.6,245.4 31,247 30.9,250" fill="none" stroke="#2a84bc" stroke-width="1.9"/>
<polygon points="28.2,249.8 33.6,249.8 30.9,252.8" fill="#2a84bc"/>
<!-- sensor symbol -->
<circle cx="34.5" cy="271.3" r="4.2" fill="#fdfdfd" stroke="#1a1a1a" stroke-width="1.3"/>
<path d="M35.6,273.6 A2.6,2.6 0 0,0 37.6,271.6 L35,272 Z" fill="#e82a10"/>
<path d="M34.4,271.8 L37.4,269" stroke="#2a7ab8" stroke-width="1"/>
<path d="M32.2,269.2 L33,270 M31.6,271.6 H32.6 M32.2,273.6 L33,272.8 M34.5,267.6 V268.6" stroke="#555" stroke-width="0.6"/>
<!-- A symbol -->
<text x="29.6" y="298.4" font-family="Liberation Serif" font-size="13" font-weight="bold" fill="#2a78b0">A</text>
<!-- surface body symbol -->
<path d="M28.1,313.7 C29,312.6 30.2,312 31.5,311.8 C33,311.4 34.4,310.2 35.3,309.2 L39.8,313.3 C38.8,314.2 37.6,314.6 36.4,315.2 C35,316 33.8,317 32.7,318.2 Z" fill="url(#gb3)" stroke="#173f5e" stroke-width="0.9" stroke-linejoin="round"/>
<!-- material -->
<circle cx="26.4" cy="327.2" r="2.3" fill="#fff" stroke="#666" stroke-width="0.9"/>
<circle cx="26.4" cy="333" r="2.3" fill="#7ac8ec" stroke="#2a78b0" stroke-width="0.9"/>
<circle cx="26.4" cy="339" r="2.3" fill="#f6c81a" stroke="#a08000" stroke-width="0.9"/>
<path d="M30.4,327.2 H41.6 M30.4,333 H41.6 M30.4,339 H34.4" stroke="#222" stroke-width="1.5"/>
<circle cx="39" cy="339.4" r="2.8" fill="#222"/>
<path d="M39,335.6 V343.2 M35.2,339.4 H42.8 M36.3,336.7 L41.7,342.1 M41.7,336.7 L36.3,342.1" stroke="#222" stroke-width="1.2"/>
<circle cx="39" cy="339.4" r="1" fill="#fff"/>

<!-- planes -->
<g id="plane" fill="none" stroke="#333" stroke-width="1">
<polygon points="28.6,352.6 40.4,348.6 40.4,361.6 28.6,365.6"/>
<path d="M34.5,347.6 V367.4" stroke-dasharray="2.4,1.6"/>
</g>
<use href="#plane" y="22"/>
<use href="#plane" y="44"/>

<!-- origin -->
<path d="M28,416 V429 H41" fill="none" stroke="#1a1a1a" stroke-width="1.8"/>
<polygon points="25.8,417.4 28,413.6 30.2,417.4" fill="#1a1a1a"/>
<polygon points="39.6,426.6 43.4,428.9 39.6,431.2" fill="#1a1a1a"/>
<rect x="26.4" y="427.2" width="3.4" height="3.4" fill="#1a1a1a"/>

<!-- surface feature -->
<polygon points="25.6,440.2 42.2,436.6 42.2,449 25.6,453" fill="url(#gb)" stroke="#1a4766" stroke-width="1" stroke-linejoin="round"/>

<!-- top arrow -->
<polygon points="162,9 169.5,15.5 162,22" fill="#3c3c3c"/>
<!-- dropdown arrows -->
<g fill="#2a2a2a">
<polygon points="260,14 265,14 262.5,17"/>
<polygon points="299,14 304,14 301.5,17"/>
<polygon points="338,14 343,14 340.5,17"/>
<polygon points="377,14 382,14 379.5,17"/>
<polygon points="416,14 421,14 418.5,17"/>
<polygon points="455,14 460,14 457.5,17"/>
<polygon points="546,14 551,14 548.5,17"/>
<polygon points="506,103 511,103 508.5,106"/>
</g>
</svg>

</body></html>
